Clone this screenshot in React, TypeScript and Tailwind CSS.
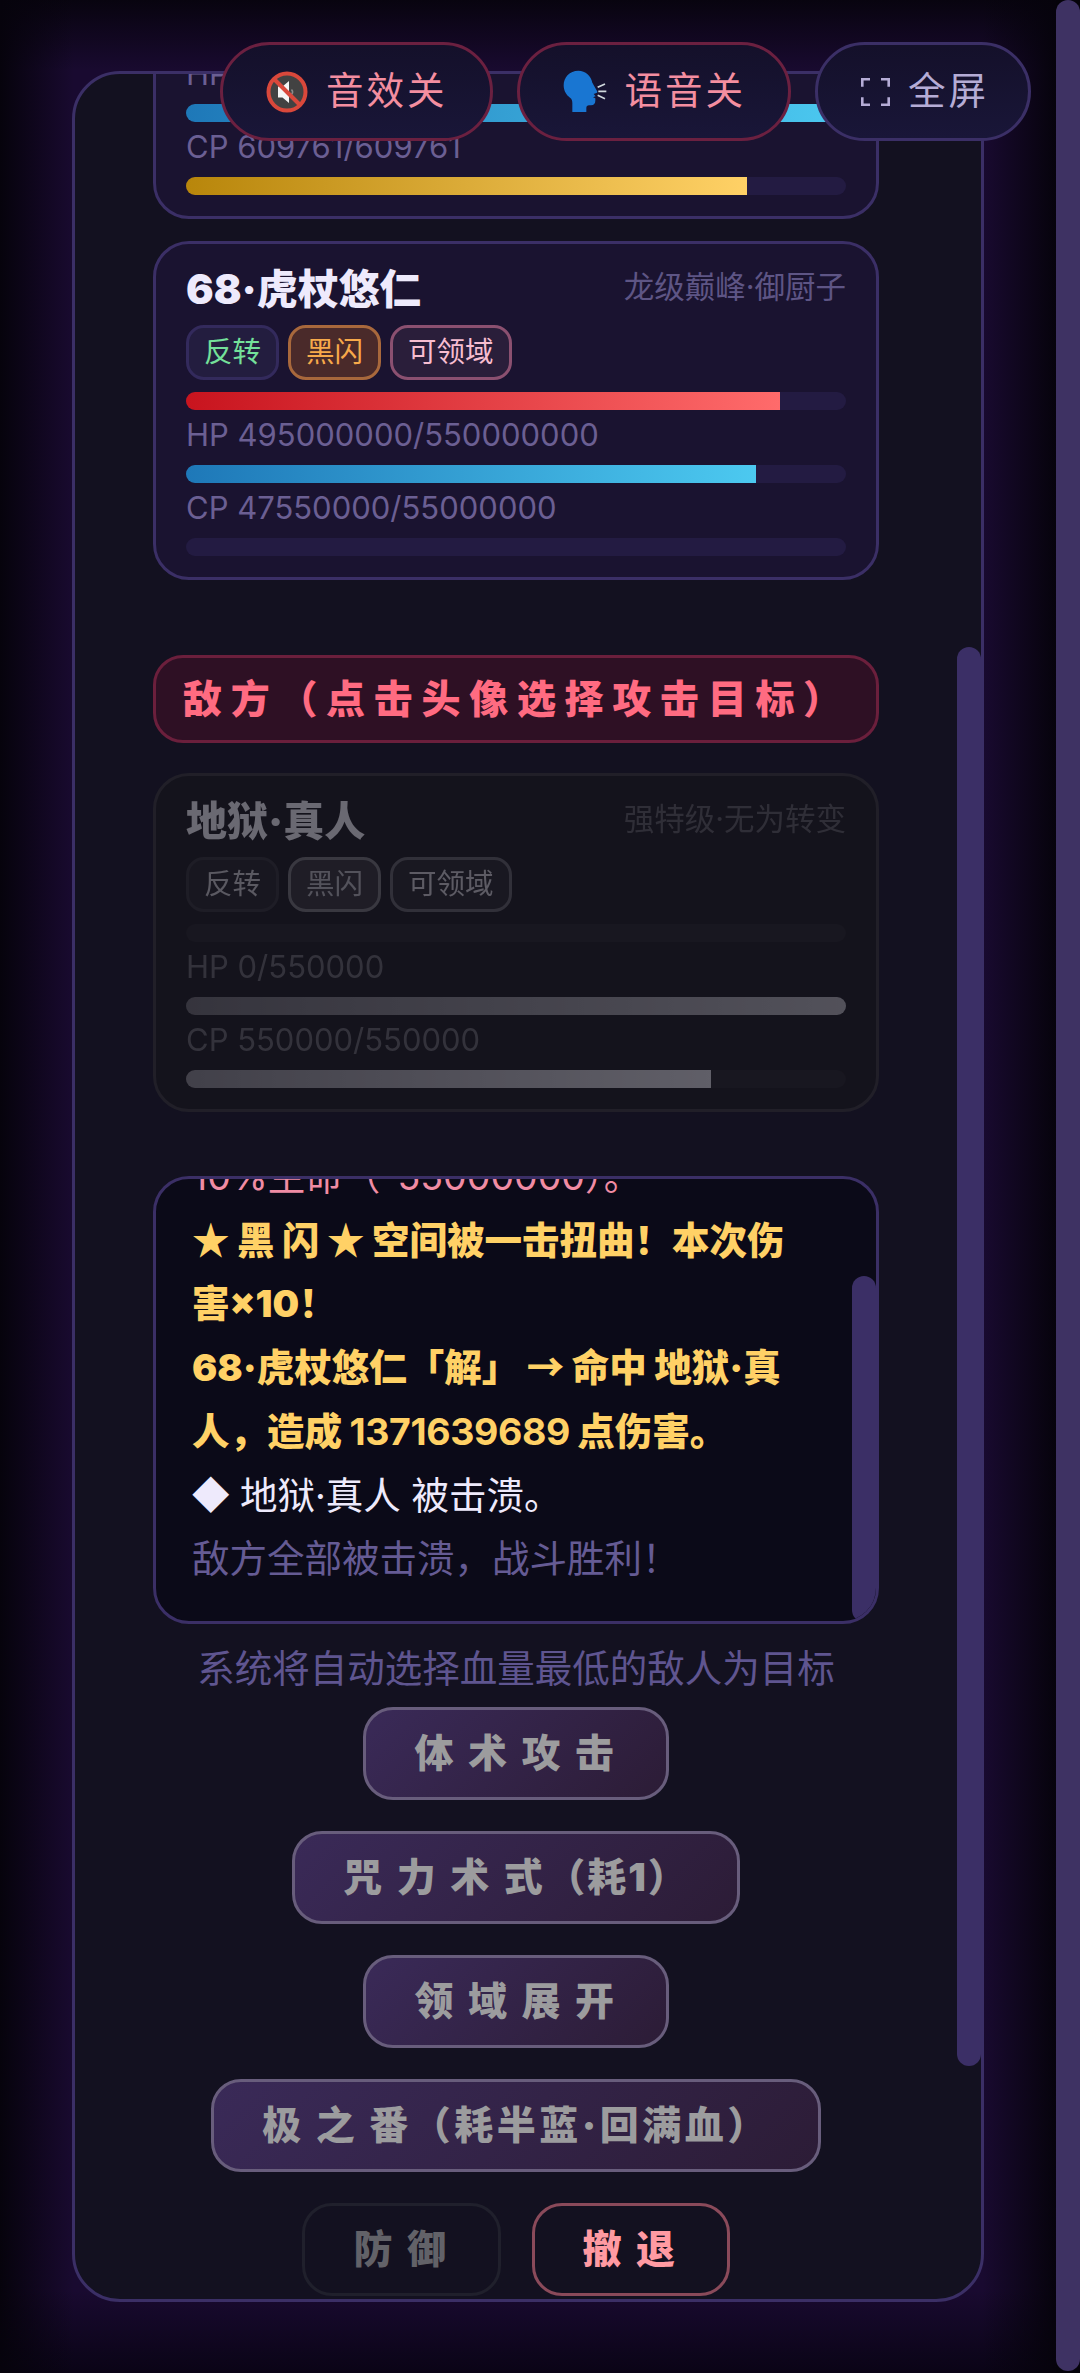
import React from "react";

const bars = {
  hp: "bg-[linear-gradient(90deg,#c8141e,#ff6b6b)]",
  cp: "bg-[linear-gradient(90deg,#1e78b8,#4cc9f0)]",
  sp: "bg-[linear-gradient(90deg,#b8860b,#ffd166)]",
};

function Bar({ kind, pct }: { kind: "hp" | "cp" | "sp"; pct: number }) {
  return (
    <div className="h-[18px] w-full shrink-0 overflow-hidden rounded-[9px] bg-[#231b42]">
      <div className={`h-full ${bars[kind]}`} style={{ width: `${pct}%` }} />
    </div>
  );
}

function Stat({ children }: { children: React.ReactNode }) {
  return <div className="mb-[6px] h-[49px] text-[31px] leading-[49px] text-[#6b5f93]">{children}</div>;
}

function Tag({ children, className }: { children: React.ReactNode; className: string }) {
  return (
    <span className={`flex h-[55px] items-center rounded-[18px] border-[3px] px-[15px] text-[28.5px] ${className}`}>
      {children}
    </span>
  );
}

function Card({
  name,
  sub,
  hp,
  hpPct,
  cp,
  cpPct,
  spPct,
  dead,
}: {
  name: string;
  sub: string;
  hp: string;
  hpPct: number;
  cp: string;
  cpPct: number;
  spPct: number;
  dead?: boolean;
}) {
  return (
    <div
      className={`w-full shrink-0 rounded-[36px] border-[3px] border-[#3b2f66] bg-[#1a1330] px-[30px] pt-[21px] pb-[21px] ${
        dead ? "opacity-40 grayscale" : ""
      }`}
    >
      <div className="mb-[12px] flex h-[48px] items-center justify-between">
        <span className="text-[41px] leading-[48px] font-black text-[#eeeafc]">{name}</span>
        <span className="mb-[4px] text-[30.5px] text-[#5e5585]">{sub}</span>
      </div>
      <div className="mb-[12px] flex gap-[9px]">
        <Tag className="border-[#332a5c] bg-[#231d3f] text-[#74e09a]">反转</Tag>
        <Tag className="border-[#a8683c] bg-[#4a2a2a] text-[#f7a94a]">黑闪</Tag>
        <Tag className="border-[#8b5070] bg-[#2a1e3a] text-[#f7bdd0]">可领域</Tag>
      </div>
      <Bar kind="hp" pct={hpPct} />
      <Stat>{hp}</Stat>
      <Bar kind="cp" pct={cpPct} />
      <Stat>{cp}</Stat>
      <Bar kind="sp" pct={spPct} />
    </div>
  );
}

function MuteIcon() {
  return (
    <svg viewBox="0 0 42 42" className="h-[42px] w-[42px] shrink-0">
      <circle cx="21" cy="21" r="18.5" fill="#424242" stroke="#d9483b" strokeWidth="4" />
      <path d="M12 15.5h4.5L23 10v22l-6.5-5.5H12z" fill="#f5f5f5" />
      <path d="M25.5 18.5c1.4 1.5 1.4 3.5 0 5" fill="none" stroke="#8a8a8a" strokeWidth="1.5" />
      <path d="M8 8l26 26" stroke="#d9483b" strokeWidth="4" />
    </svg>
  );
}

function HeadIcon() {
  return (
    <svg viewBox="0 0 132 132" className="h-[44px] w-[44px] shrink-0">
      <path
        d="M46 2C20 2 2 22 2 46c0 16 8 30 19 37 6 4 7 10 7 17v26h42v-12c0-5 3-8 8-8h6c9 0 13-6 13-14v-7l-7-3 8-3-6-7 8-3c3-1 4-3 2-6L88 38C84 18 68 2 46 2z"
        fill="#1976d2"
      />
      <path d="M104 52l22-10M106 64h24M104 76l22 10" stroke="#cfd8dc" strokeWidth="5" fill="none" />
    </svg>
  );
}

function FullIcon() {
  return (
    <svg viewBox="0 0 29 28" className="h-[28px] w-[29px] shrink-0" fill="none" stroke="#b5acd6" strokeWidth="2.6">
      <path d="M9 1.3H1.3v7.4M20 1.3h7.7v7.4M9 26.7H1.3v-7.4M20 26.7h7.7v-7.4" />
    </svg>
  );
}

function TopButton({
  icon,
  label,
  accent,
  className,
}: {
  icon: React.ReactNode;
  label: string;
  accent?: boolean;
  className: string;
}) {
  return (
    <div
      className={`flex h-[99px] items-center gap-[18px] rounded-full border-[3px] bg-[linear-gradient(180deg,#14102a,#191638)] text-[37.5px] tracking-[3px] ${
        accent ? "border-[#6b2040] text-[#f48ea0]" : "border-[#3b2f66] text-[#b5acd6]"
      } ${className}`}
    >
      {icon}
      <span>{label}</span>
    </div>
  );
}

function Action({
  children,
  className = "border-[#685d7c] bg-[linear-gradient(135deg,#3a2a58,#2c1c36)] text-[#9c9c9e]",
}: {
  children: React.ReactNode;
  className?: string;
}) {
  return (
    <div className={`flex h-[93px] items-center rounded-[30px] border-[3px] px-[48px] text-[39px] font-black tracking-[3.5px] whitespace-nowrap ${className}`}>
      {children}
    </div>
  );
}

function Spaced({ children }: { children: React.ReactNode }) {
  return <span className="tracking-[14.5px]">{children}</span>;
}

function Cjk({ children }: { children: React.ReactNode }) {
  return <span className="font-['Noto_Sans_CJK_SC',sans-serif] leading-none">{children}</span>;
}

export default function App() {
  return (
    <div className="relative flex h-[2373px] w-[1080px] overflow-hidden bg-[#05030a] font-['Inter','Noto_Sans_CJK_SC',sans-serif]">
      <div className="h-full w-[1056px] bg-[linear-gradient(90deg,#06030c,transparent_7%,transparent_93%,#06030c),linear-gradient(180deg,#08040f,transparent_3%,transparent_96.5%,#0a0416),linear-gradient(#190a30,#190a30)] pt-[71px] pl-[72px]">
        <div className="relative flex h-[2231px] w-[912px] flex-col justify-end overflow-hidden rounded-[48px] border-[3px] border-[#3b2f66] bg-[#131120] pr-[102px] pb-[3px] pl-[78px]">
          <Card name="68·虎杖悠仁" sub="龙级巅峰·御厨子" hp="HP 609761/609761" hpPct={100} cp="CP 609761/609761" cpPct={100} spPct={85} />
          <div className="mt-[22px] w-full shrink-0">
            <Card
              name="68·虎杖悠仁"
              sub="龙级巅峰·御厨子"
              hp="HP 495000000/550000000"
              hpPct={90}
              cp="CP 47550000/55000000"
              cpPct={86.4}
              spPct={0}
            />
          </div>
          <div className="mt-[75px] flex h-[88px] w-full shrink-0 items-center rounded-[30px] border-[3px] border-[#6b1f3c] bg-[#2e1024] pl-[27px] text-[39px] font-black tracking-[8.7px] whitespace-nowrap text-[#ff6b81]">
            敌方（点击头像选择攻击目标）
          </div>
          <div className="mt-[30px] w-full shrink-0">
            <Card name="地狱·真人" sub="强特级·无为转变" hp="HP 0/550000" hpPct={0} cp="CP 550000/550000" cpPct={100} spPct={79.5} dead />
          </div>
          <div className="relative mt-[64px] flex h-[448px] w-full shrink-0 flex-col justify-end overflow-hidden rounded-[36px] border-[3px] border-[#3b2f66] bg-[#0b0a18] pr-[60px] pb-[30px] pl-[36px] text-[37.5px] leading-[1.7]">
            <div className="text-[#f08ca4]">10%生命（-55000000）。</div>
            <div className="font-black text-[#ffd166]"><Cjk>★</Cjk> 黑 闪 <Cjk>★</Cjk> 空间被一击扭曲！本次伤害×10！</div>
            <div className="font-black text-[#ffd166]">68·虎杖悠仁「解」 <Cjk>→</Cjk> 命中 地狱·真人，造成 <span className="font-bold tracking-[-0.4px]">1371639689</span> 点伤害。</div>
            <div className="text-[#eeeafc]"><Cjk>◆</Cjk> 地狱·真人 被击溃。</div>
            <div className="text-[#655b94]">敌方全部被击溃，战斗胜利！</div>
            <div className="absolute top-[97px] right-0 h-[346px] w-[24px] rounded-full bg-[#3b2f66]" />
          </div>
          <div className="mt-[13px] h-[64px] w-full shrink-0 text-center text-[37.5px] leading-[64px] whitespace-nowrap text-[#5f5590]">
            系统将自动选择血量最低的敌人为目标
          </div>
          <div className="mt-[6px] flex w-full shrink-0 flex-col items-center gap-[31px]">
            <Action><Spaced>体术攻</Spaced>击</Action>
            <Action><Spaced>咒力术</Spaced>式<span className="tracking-[2px]">（耗1）</span></Action>
            <Action><Spaced>领域展</Spaced>开</Action>
            <Action><Spaced>极之</Spaced>番（耗半蓝·回满血）</Action>
            <div className="flex gap-[31px]">
              <Action className="border-[#20202c] bg-transparent text-[#626268]"><Spaced>防</Spaced>御</Action>
              <Action className="border-[#8a4a5a] bg-transparent text-[#ff9aa2]"><Spaced>撤</Spaced>退</Action>
            </div>
          </div>
          <div className="absolute top-[573px] right-0 h-[1419px] w-[24px] rounded-full bg-[#3b2f66]" />
        </div>
      </div>
      <div className="h-[2371px] w-[24px] rounded-full bg-[#3e3263]" />
      <div className="absolute top-[42px] right-[49px] flex gap-[24px]">
        <TopButton accent icon={<MuteIcon />} label="音效关" className="pr-[42px] pl-[43px]" />
        <TopButton accent icon={<HeadIcon />} label="语音关" className="pr-[42px] pl-[43px]" />
        <TopButton icon={<FullIcon />} label="全屏" className="pr-[39px] pl-[43px]" />
      </div>
    </div>
  );
}
